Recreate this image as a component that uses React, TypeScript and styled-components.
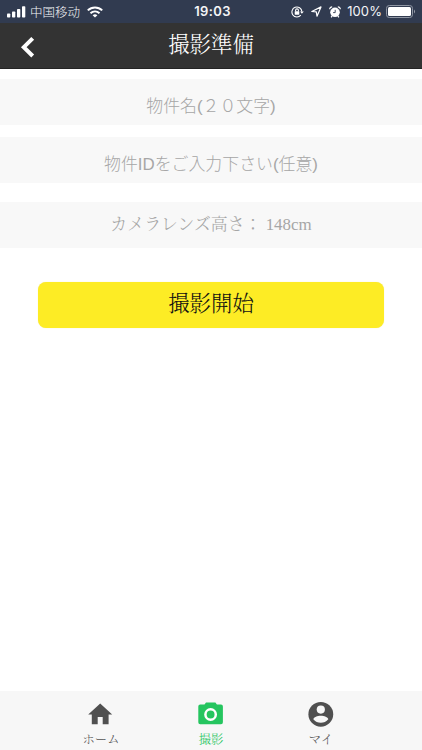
import React from "react";
import styled, { createGlobalStyle } from "styled-components";

const sans = '"Liberation Sans", "Noto Sans CJK JP", sans-serif';
const serif = '"Liberation Serif", "Noto Serif CJK JP", "Noto Sans CJK JP", serif';

const GlobalStyle = createGlobalStyle`
  * { box-sizing: border-box; }
  body { margin: 0; background: #fff; }
`;

const Screen = styled.div`
  display: flex;
  flex-direction: column;
  width: 422px;
  height: 750px;
  overflow: hidden;
  background: #fff;
`;

const StatusBar = styled.div`
  display: grid;
  grid-template-columns: 1fr auto 1fr;
  align-items: center;
  height: 23px;
  flex: none;
  padding: 0 6px 0 7px;
  background: #313b50;
  color: #f4f5f7;
`;

const StatusGroup = styled.div<{ $end?: boolean }>`
  display: flex;
  align-items: center;
  justify-content: ${(p) => (p.$end ? "flex-end" : "flex-start")};
  svg { display: block; flex: none; }
`;

const Carrier = styled.span`
  margin: 0 7px 0 4px;
  font: 300 12.5px/22px "Noto Sans CJK SC", sans-serif;
  white-space: nowrap;
`;

const Clock = styled.time`
  padding-left: 2px;
  font: 600 13px/23px Inter, sans-serif;
  letter-spacing: 0.35px;
`;

const Percent = styled.span`
  margin: 0 4px 0 6px;
  font: 400 13px/23px Inter, sans-serif;
  letter-spacing: 0.1px;
`;

const Header = styled.header`
  display: grid;
  grid-template-columns: 60px 1fr 60px;
  flex: none;
  height: 46px;
  background: #333;
  border-bottom: 1px solid #242424;
`;

const BackButton = styled.button`
  display: flex;
  padding: 13px 0 0 20px;
  border: 0;
  background: none;
`;

const Title = styled.h1`
  margin: 0;
  color: #fff;
  text-align: center;
  font: 300 21.4px/44px ${serif};
`;

const Form = styled.main`
  display: flex;
  flex: 1;
  flex-direction: column;
  padding-top: 10px;
`;

const Field = styled.div<{ $gap: number; $serif?: boolean }>`
  height: 46px;
  flex: none;
  margin-bottom: ${(p) => p.$gap}px;
  background: #f8f8f8;
  color: #a6a6a6;
  text-align: center;
  white-space: pre;
  font: 300 16.9px/${(p) => (p.$serif ? 46 : 56)}px ${(p) => (p.$serif ? serif : sans)};
`;

const StartButton = styled.button`
  height: 46px;
  margin: 0 38px;
  padding: 0 0 2px;
  border: 0;
  border-radius: 8px;
  background: #fdec25;
  box-shadow: 0 0 1px #eee49a;
  color: #111;
  font: 300 21.4px/42px ${serif};
`;

const TabBar = styled.nav`
  display: grid;
  grid-template-columns: repeat(3, 110px);
  justify-content: center;
  flex: none;
  height: 59px;
  background: #f7f7f7;
`;

const Tab = styled.div<{ $active?: boolean }>`
  display: flex;
  flex-direction: column;
  align-items: center;
  padding-top: 9px;
  color: ${(p) => (p.$active ? "#25c55f" : "#505050")};
  font: 300 12.3px/18px ${serif};
  svg { display: block; margin-bottom: 3px; }
`;

const Signal = () => (
  <svg width="19" height="12" viewBox="0 0 19 12" fill="#fff">
    <rect x="0" y="7.5" width="3.3" height="4" rx="0.8" />
    <rect x="5" y="5.5" width="3.3" height="6" rx="0.8" />
    <rect x="10" y="3" width="3.3" height="8.5" rx="0.8" />
    <rect x="15" y="0.3" width="3.3" height="11.2" rx="0.8" />
  </svg>
);

const Wifi = () => (
  <svg width="16" height="12" viewBox="0 0 16 12" fill="none" stroke="#fff" strokeWidth="2">
    <path d="M.8 4.4C4.9.4 11.1.4 15.2 4.4" />
    <path d="M3.5 7.3C6.1 4.9 9.9 4.9 12.5 7.3" />
    <path d="M5.6 9.2Q8 7.3 10.4 9.2L8 11.6Z" fill="#fff" stroke="none" />
  </svg>
);

const RotationLock = () => (
  <svg width="13" height="12" viewBox="0 0 13 12" fill="none" stroke="#fff" strokeWidth="1.1">
    <path d="M9.8 9.2A5 5 0 1 1 10.9 5.6" />
    <path d="M9 5.4H12.8L10.9 7.8Z" fill="#fff" stroke="none" />
    <path d="M4.6 5.5V4.3a1.4 1.4 0 0 1 2.8 0V5.5" />
    <rect x="3.7" y="5.2" width="4.6" height="3.5" rx=".4" fill="#fff" stroke="none" />
  </svg>
);

const Location = () => (
  <svg width="11" height="11" viewBox="0 0 11 11" fill="none" stroke="#fff" strokeWidth="1.2" strokeLinejoin="round">
    <path d="M.8 5.5 10 .9 6 10.2 5.3 5.9Z" />
  </svg>
);

const Alarm = () => (
  <svg width="12" height="12" viewBox="0 0 12 12" fill="#fff">
    <circle cx="6" cy="6.3" r="4.8" />
    <path d="M.8 3.3Q.6 1.1 3.2.9M11.2 3.3Q11.4 1.1 8.8.9M3 10 2.2 11.3M9 10l.8 1.3" stroke="#fff" strokeWidth="1.3" fill="none" />
    <path d="M6.2 3.8V6.6H4.1" stroke="#313b50" strokeWidth=".9" fill="none" />
  </svg>
);

const Battery = () => (
  <svg width="30" height="13" viewBox="0 0 30 13">
    <rect x=".5" y=".5" width="26" height="12" rx="2.8" fill="none" stroke="#8f96a3" />
    <rect x="2" y="2" width="23" height="9" rx="1.5" fill="#fff" />
    <path d="M28 4.5Q30 6.5 28 8.5Z" fill="#9ba1ac" />
  </svg>
);

const Chevron = () => (
  <svg width="16" height="22" viewBox="0 0 16 22" fill="none" stroke="#fff" strokeWidth="4">
    <path d="M12.7 2.3 3.8 11.2 12.7 20" />
  </svg>
);

const Home = () => (
  <svg width="26" height="28" viewBox="0.8 0 26 28" fill="currentColor">
    <path d="M13 3.4 1 14.5H4.6V24.2H10.5V17H15.5V24.2H21.4V14.5H25Z" />
  </svg>
);

const Camera = () => (
  <svg width="26" height="28" viewBox="0.4 0 26 28" fill="currentColor">
    <path d="M8.4 2.4H17.8L19.3 4.5H23.4Q25.3 4.5 25.3 6.4V22.2Q25.3 24.2 23.4 24.2H2.6Q.7 24.2 .7 22.2V6.4Q.7 4.5 2.6 4.5H6.9Z" />
    <circle cx="13" cy="14.5" r="5.2" fill="none" stroke="#fff" strokeWidth="2.5" />
  </svg>
);

const Profile = () => (
  <svg width="26" height="28" viewBox="0.2 0 26 28">
    <circle cx="13" cy="14.3" r="12.4" fill="currentColor" />
    <circle cx="13" cy="9.6" r="4.1" fill="#f8f8f8" />
    <path d="M5.5 19.3C6.5 14.5 19.5 14.5 20.5 19.3C16.8 24 9.2 24 5.5 19.3Z" fill="#f8f8f8" />
  </svg>
);

const StatusIcons = styled.span`
  display: flex;
  align-items: center;
  gap: 7px;
`;

export default function App() {
  return (
    <>
      <GlobalStyle />
      <Screen>
        <StatusBar>
          <StatusGroup>
            <Signal />
            <Carrier>中国移动</Carrier>
            <Wifi />
          </StatusGroup>
          <Clock>19:03</Clock>
          <StatusGroup $end>
            <StatusIcons>
              <RotationLock />
              <Location />
              <Alarm />
            </StatusIcons>
            <Percent>100%</Percent>
            <Battery />
          </StatusGroup>
        </StatusBar>
        <Header>
          <BackButton aria-label="戻る"><Chevron /></BackButton>
          <Title>撮影準備</Title>
        </Header>
        <Form>
          <Field $gap={12}>物件名(２０文字)</Field>
          <Field $gap={19}>物件IDをご入力下さい(任意)</Field>
          <Field $gap={34} $serif>カメラレンズ高さ： 148cm</Field>
          <StartButton>撮影開始</StartButton>
        </Form>
        <TabBar>
          <Tab><Home />ホーム</Tab>
          <Tab $active><Camera />撮影</Tab>
          <Tab><Profile />マイ</Tab>
        </TabBar>
      </Screen>
    </>
  );
}
